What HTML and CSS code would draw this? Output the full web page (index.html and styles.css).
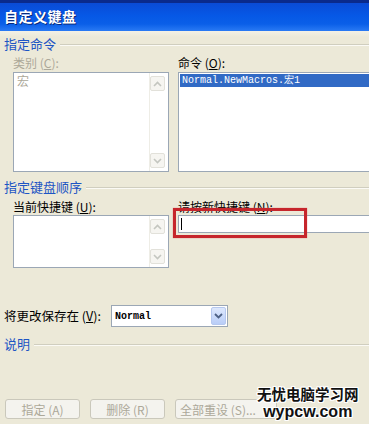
FILE: index.html
```html
<!DOCTYPE html>
<html>
<head>
<meta charset="utf-8">
<link rel="stylesheet" href="styles.css">
</head>
<body>
<div class="dialog">
  <div class="titlebar"><span class="title">自定义键盘</span></div>
  <div class="content">
    <div class="group-head h1"><span>指定命令</span><i class="rule"></i></div>
    <div class="cols r1">
      <div class="col-left">
        <div class="label disabled">类别 (<u>C</u>):</div>
        <div class="listbox tall">
          <div class="items"><div class="item disabled">宏</div></div>
          <div class="scroll">
            <div class="sbtn"><svg width="9" height="6" viewBox="0 0 9 6"><path d="M1 5 L4.5 1.5 L8 5" fill="none" stroke="#c4c6c0" stroke-width="1.6"/></svg></div>
            <div class="sbtn"><svg width="9" height="6" viewBox="0 0 9 6"><path d="M1 1 L4.5 4.5 L8 1" fill="none" stroke="#c4c6c0" stroke-width="1.6"/></svg></div>
          </div>
        </div>
      </div>
      <div class="col-right">
        <div class="label">命令 (<u>O</u>):</div>
        <div class="listbox tall wide">
          <div class="items"><div class="item sel">Normal.NewMacros.宏1</div></div>
        </div>
      </div>
    </div>
    <div class="group-head h2"><span>指定键盘顺序</span><i class="rule"></i></div>
    <div class="cols r2">
      <div class="col-left">
        <div class="label">当前快捷键 (<u>U</u>):</div>
        <div class="listbox short">
          <div class="items"></div>
          <div class="scroll">
            <div class="sbtn"><svg width="9" height="6" viewBox="0 0 9 6"><path d="M1 5 L4.5 1.5 L8 5" fill="none" stroke="#c4c6c0" stroke-width="1.6"/></svg></div>
            <div class="sbtn"><svg width="9" height="6" viewBox="0 0 9 6"><path d="M1 1 L4.5 4.5 L8 1" fill="none" stroke="#c4c6c0" stroke-width="1.6"/></svg></div>
          </div>
        </div>
      </div>
      <div class="col-right">
        <div class="label">请按新快捷键 (<u>N</u>):</div>
        <div class="input-wrap">
          <div class="input"><i class="caret"></i></div>
          <div class="highlight"></div>
        </div>
      </div>
    </div>
    <div class="save-row">
      <span class="label">将更改保存在 (<u>V</u>):</span>
      <div class="combo">
        <span class="combo-text">Normal</span>
        <span class="combo-btn"><svg width="9" height="6" viewBox="0 0 9 6"><path d="M1 1 L4.5 4.5 L8 1" fill="none" stroke="#4d6185" stroke-width="1.8"/></svg></span>
      </div>
    </div>
    <div class="group-head h3"><span>说明</span><i class="rule"></i></div>
    <div class="buttons">
      <div class="btn b1">指定 (A)</div>
      <div class="btn b2">删除 (R)</div>
      <div class="btn b3">全部重设 (S)...</div>
    </div>
  </div>
  <div class="watermark">
    <div class="wm1">无忧电脑学习网</div>
    <div class="wm2">wypcw.com</div>
  </div>
</div>
</body>
</html>
```
FILE: styles.css
```css
html, body {
  margin: 0;
  padding: 0;
}
body {
  width: 369px;
  height: 424px;
  overflow: hidden;
  background: #ece9d8;
  font-family: "Noto Sans CJK SC", "Liberation Sans", sans-serif;
  font-size: 12px;
  color: #000;
}
.dialog {
  position: relative;
  width: 369px;
  height: 424px;
  overflow: hidden;
}
.titlebar {
  height: 28px;
  border-top: 3px solid #0a2a8c;
  background: linear-gradient(#0a4bd6 0%, #0658e6 45%, #0a5fe8 75%, #2a7af4 100%);
  display: flex;
  align-items: center;
  padding-left: 4px;
  box-sizing: content-box;
}
.title {
  color: #fff;
  font-weight: bold;
  font-size: 14px;
  letter-spacing: 0.5px;
  line-height: 14px;
  margin-top: -2px;
  text-shadow: 1px 1px 0 #0a2a7a;
}
.content {
  display: flex;
  flex-direction: column;
  background: linear-gradient(#f3f1e6 0px, #ece9d8 6px);
}
.group-head {
  display: flex;
  align-items: center;
  height: 14px;
  padding-left: 4px;
  color: #1d55c4;
  font-size: 13px;
  line-height: 14px;
}
.group-head .rule {
  flex: 1;
  height: 0;
  border-top: 1px solid #d0cebf;
  border-bottom: 1px solid #fbfaf5;
  margin-left: 4px;
  margin-top: 2px;
}
.h1 { margin-top: 6px; }
.h2 { margin-top: 8px; }
.h3 { margin-top: 10px; }
.cols {
  display: flex;
  padding-left: 13px;
  gap: 9px;
}
.r1 { margin-top: 5px; }
.r2 { margin-top: 6px; }
.col-left { width: 156px; flex: none; }
.col-right { width: 230px; flex: none; }
.label {
  height: 14px;
  line-height: 14px;
  font-size: 12px;
  white-space: nowrap;
}
.label u { text-decoration: underline; }
.disabled { color: #aca899; }
.r1 .label { margin-bottom: 2px; }
.r2 .label { margin-bottom: 1px; }
.listbox {
  display: flex;
  box-sizing: border-box;
  border: 1px solid #9ba7b5;
  background: #fff;
}
.listbox.tall { height: 100px; }
.listbox.short { height: 53px; }
.items { flex: 1; padding: 1px; }
.item {
  height: 13px;
  line-height: 13px;
  padding-left: 2px;
  font-size: 12px;
}
.item.sel {
  background: #316ac5;
  color: #fff;
  font-family: "Liberation Mono", monospace;
  font-size: 10px;
  white-space: nowrap;
}
.scroll {
  width: 17px;
  display: flex;
  flex-direction: column;
  justify-content: space-between;
  padding: 3px 1px 3px 0;
  border-left: 1px solid #eeede6;
}
.sbtn {
  width: 15px;
  height: 15px;
  box-sizing: border-box;
  border: 1px solid #e2e1da;
  border-radius: 2px;
  background: #f6f5f1;
  display: flex;
  align-items: center;
  justify-content: center;
}
.input-wrap {
  position: relative;
}
.input {
  height: 18px;
  box-sizing: border-box;
  border: 1px solid #9ba7b5;
  background: #fff;
  padding: 2px 0 0 2px;
}
.caret {
  display: block;
  width: 1px;
  height: 12px;
  background: #000;
}
.highlight {
  position: absolute;
  left: -5px;
  top: -7px;
  width: 134px;
  height: 30px;
  box-sizing: border-box;
  border: 3px solid #c6262c;
  box-shadow: 0 0 1px #e07070;
}
.save-row {
  display: flex;
  align-items: center;
  margin-top: 37px;
  padding-left: 4px;
  height: 22px;
}
.save-row .label { width: 107px; font-size: 12.5px; }
.combo {
  width: 117px;
  height: 22px;
  box-sizing: border-box;
  border: 1px solid #9ba7b5;
  background: #fff;
  display: flex;
  align-items: center;
  justify-content: space-between;
  padding: 1px;
}
.combo-text {
  font-family: "Liberation Mono", monospace;
  font-weight: bold;
  font-size: 10px;
  padding-left: 2px;
}
.combo-btn {
  width: 15px;
  height: 18px;
  box-sizing: border-box;
  border: 1px solid #b6c8ef;
  border-radius: 2px;
  background: linear-gradient(#dde8fd, #b9cdf7);
  display: flex;
  align-items: center;
  justify-content: center;
}
.buttons {
  display: flex;
  margin-top: 48px;
  padding-left: 5px;
  gap: 10px;
}
.btn {
  height: 20px;
  box-sizing: border-box;
  border: 1px solid #cac8bb;
  border-radius: 3px;
  background: #f4f3ee;
  color: #aca899;
  font-size: 12px;
  display: flex;
  align-items: center;
  justify-content: center;
  white-space: nowrap;
  overflow: hidden;
}
.b1, .b2 { width: 75px; }
.b3 { width: 102px; justify-content: flex-start; padding-left: 4px; }
.watermark {
  position: absolute;
  left: 257px;
  top: 385px;
  display: flex;
  flex-direction: column;
  align-items: center;
  font-weight: bold;
  color: #111;
  text-shadow: 1px 0 0 #fff, -1px 0 0 #fff, 0 1px 0 #fff, 0 -1px 0 #fff, 1px 1px 0 #fff, -1px -1px 0 #fff, 1px -1px 0 #fff, -1px 1px 0 #fff;
}
.wm1 { font-family: "Noto Sans CJK SC", sans-serif; font-size: 14.5px; line-height: 18px; }
.wm2 { font-family: "Liberation Sans", sans-serif; font-size: 16px; line-height: 18px; }
```
